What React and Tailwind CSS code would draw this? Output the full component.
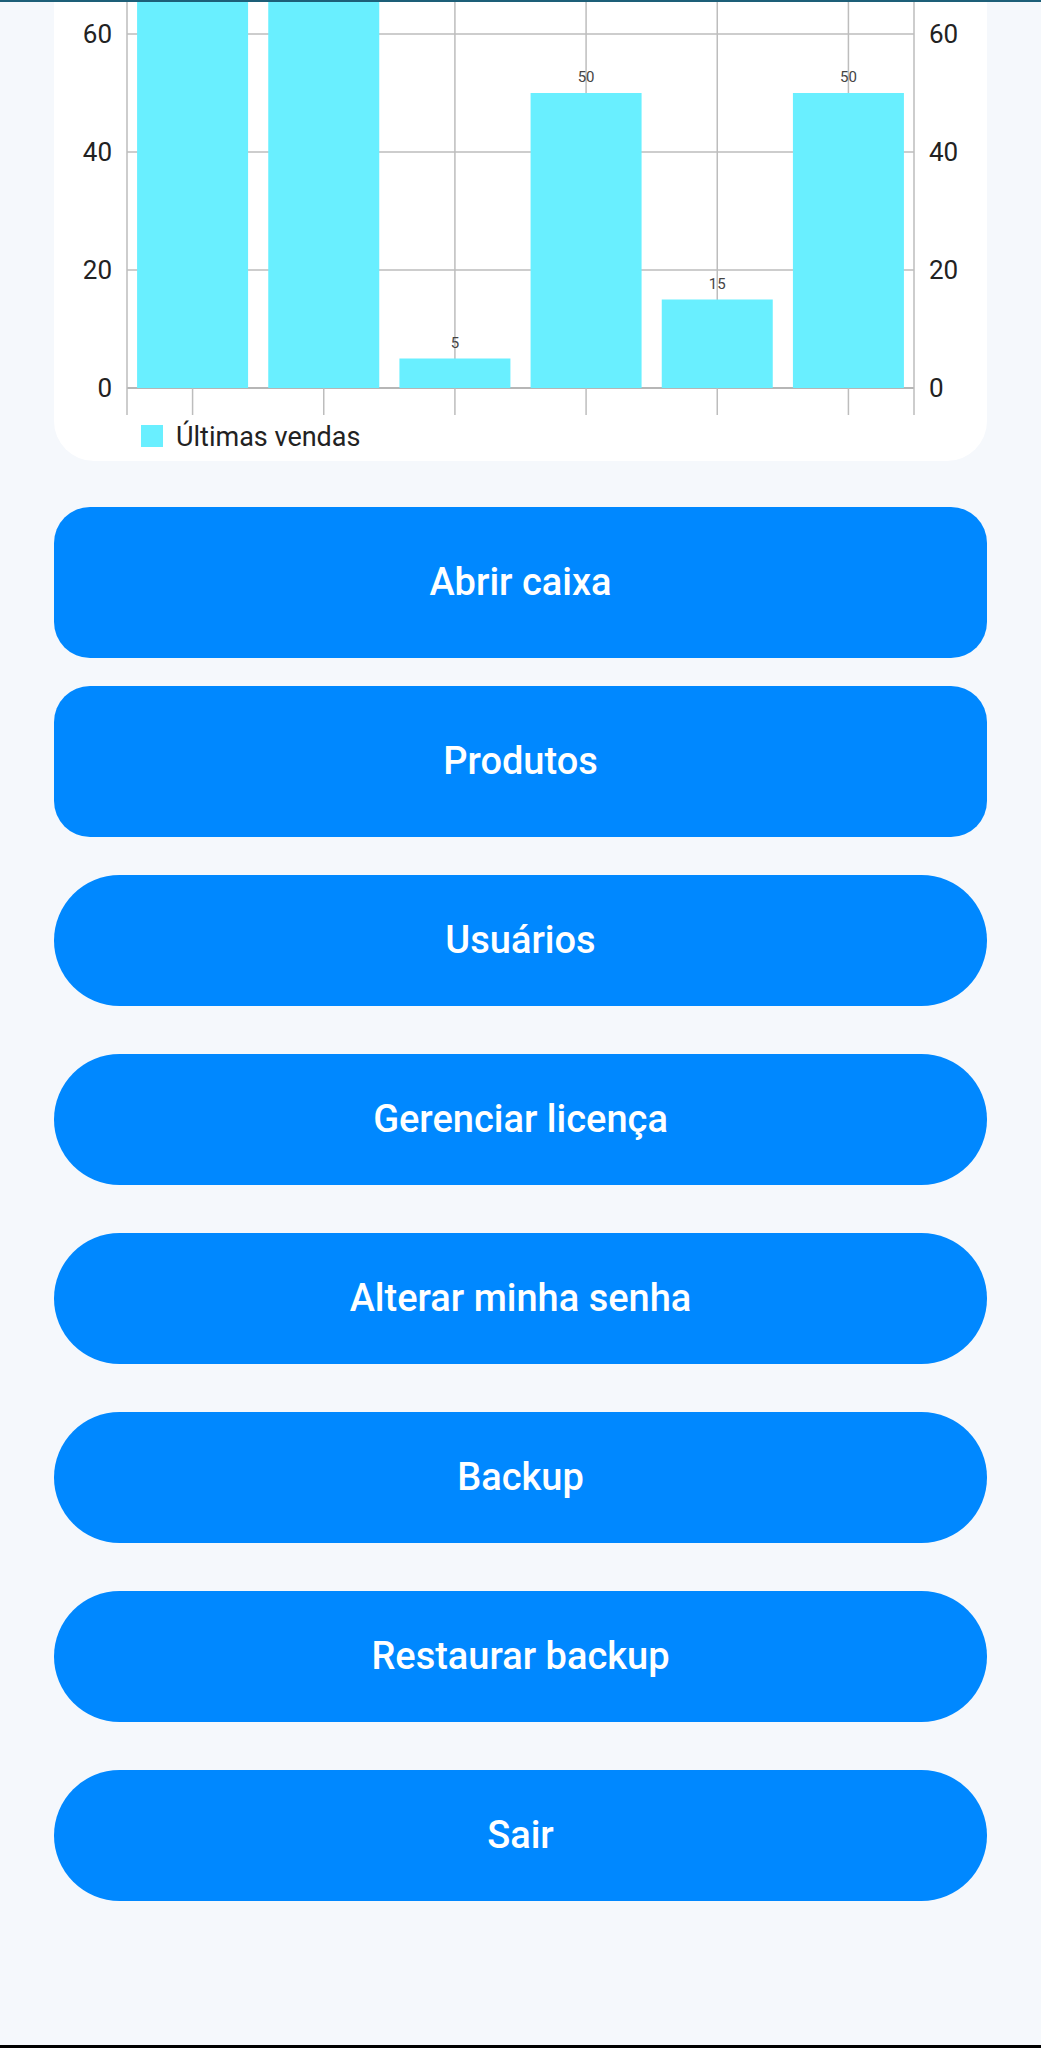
import React from 'react';

// bar data; the first two run past the top of the visible area
const sales = [80, 90, 5, 50, 15, 50];

const SalesChart = () => {
  const left = 73;
  const right = 860;
  const base = 386;
  const unit = 5.9; // px per sale
  const step = (right - left) / sales.length;
  const barW = 111;
  const ticks = [0, 20, 40, 60];

  return (
    <svg width="933" height="459" viewBox="0 0 933 459" className="block">
      {/* horizontal grid */}
      {ticks.map((t) => (
        <line
          key={t}
          x1={left}
          x2={right}
          y1={base - t * unit}
          y2={base - t * unit}
          stroke={t === 0 ? '#9e9e9e' : '#bdbdbd'}
          strokeWidth="1.5"
        />
      ))}
      {/* vertical grid + axis lines */}
      <line x1={left} x2={left} y1="0" y2="413" stroke="#bdbdbd" strokeWidth="1.5" />
      <line x1={right} x2={right} y1="0" y2="413" stroke="#bdbdbd" strokeWidth="1.5" />
      {sales.map((_, i) => {
        const cx = left + step * i + step / 2;
        return <line key={i} x1={cx} x2={cx} y1="0" y2="413" stroke="#bdbdbd" strokeWidth="1.5" />;
      })}
      {/* bars */}
      {sales.map((v, i) => {
        const cx = left + step * i + step / 2;
        const top = base - v * unit;
        return (
          <g key={i}>
            <rect x={cx - barW / 2} y={top} width={barW} height={base - top} fill="#69efff" />
            {top > 20 && (
              <text x={cx} y={top - 11} textAnchor="middle" fontSize="15" fill="#444">
                {v}
              </text>
            )}
          </g>
        );
      })}
      {/* y labels both sides */}
      {ticks.map((t) => (
        <g key={t}>
          <text x="58" y={base - t * unit + 9} textAnchor="end" fontSize="26" fill="#222">
            {t}
          </text>
          <text x="875" y={base - t * unit + 9} fontSize="26" fill="#222">
            {t}
          </text>
        </g>
      ))}
      {/* legend */}
      <rect x="87" y="423" width="22" height="22" fill="#69efff" />
      <text x="122" y="444" fontSize="27" fill="#222">
        Últimas vendas
      </text>
    </svg>
  );
};

const MenuButton = ({ label, className }) => (
  <button
    className={`w-full bg-[#0088ff] text-white text-[38px] font-medium flex items-center justify-center ${className}`}
  >
    {label}
  </button>
);

export default function App() {
  const pills = ['Gerenciar licença', 'Alterar minha senha', 'Backup', 'Restaurar backup', 'Sair'];

  return (
    <div className="h-[2048px] bg-[#f5f8fc] flex flex-col overflow-hidden font-['Roboto','Noto_Sans',sans-serif]">
      <div className="h-[2px] bg-[#1d5f78]" />
      <div className="px-[54px] flex flex-col">
        <div className="h-[459px] bg-white rounded-b-[40px] overflow-hidden">
          <SalesChart />
        </div>

        <MenuButton label="Abrir caixa" className="mt-[46px] h-[151px] rounded-[36px]" />
        <MenuButton label="Produtos" className="mt-[28px] h-[151px] rounded-[36px]" />
        <MenuButton label="Usuários" className="mt-[38px] h-[131px] rounded-full" />
        {pills.map((p) => (
          <MenuButton key={p} label={p} className="mt-[48px] h-[131px] rounded-full" />
        ))}
      </div>
      <div className="mt-auto h-[3px] bg-black" />
    </div>
  );
}
